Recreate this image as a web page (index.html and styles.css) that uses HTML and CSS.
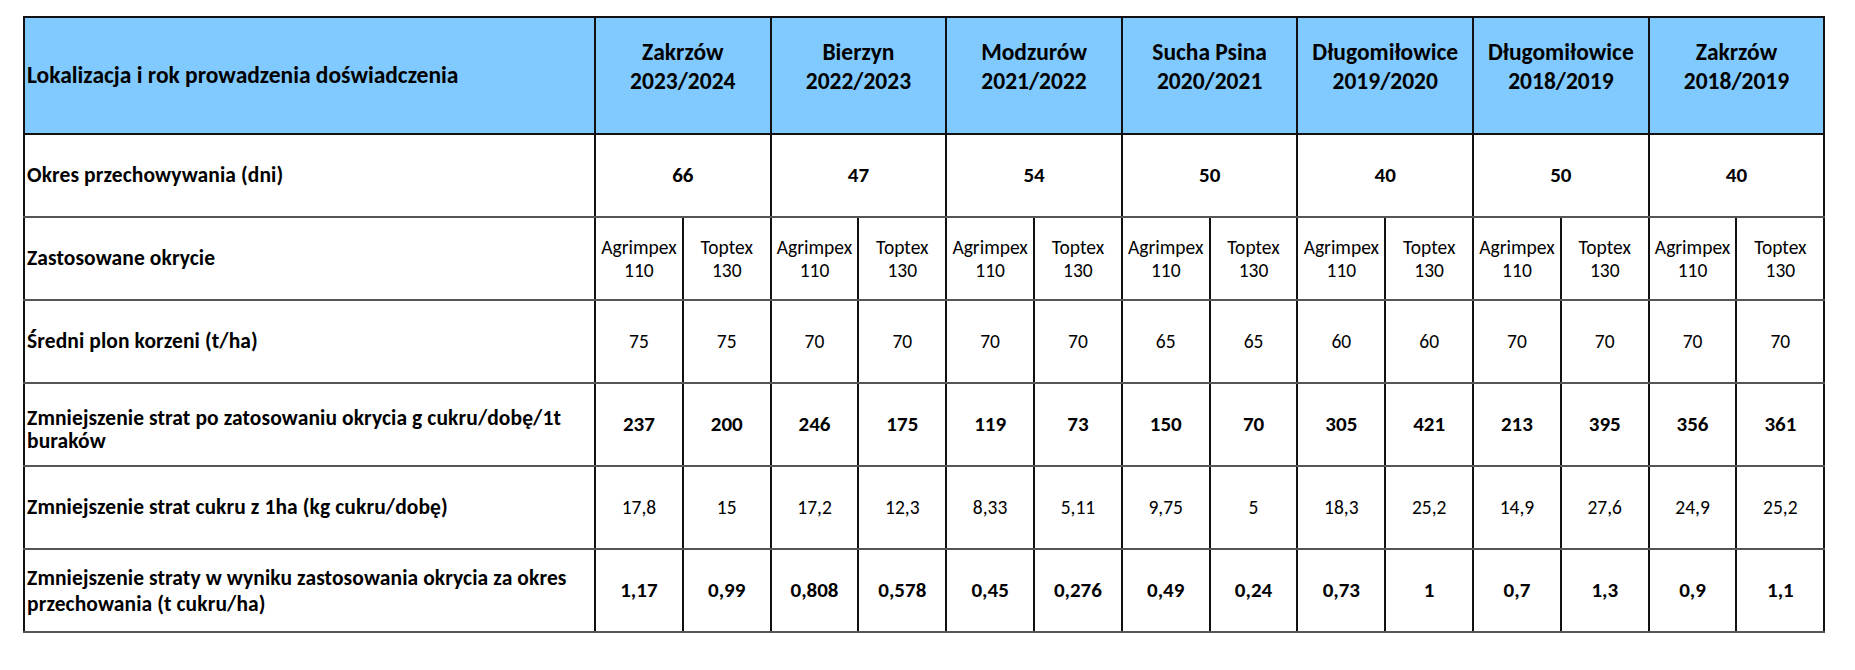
FILE: index.html
```html
<!DOCTYPE html>
<html lang="pl">
<head>
<meta charset="utf-8">
<title>Tabela</title>
<link rel="stylesheet" href="styles.css">
</head>
<body>
<table class="data">
  <colgroup>
    <col class="c-label">
    <col class="c-sub"><col class="c-sub"><col class="c-sub"><col class="c-sub">
    <col class="c-sub"><col class="c-sub"><col class="c-sub"><col class="c-sub">
    <col class="c-sub"><col class="c-sub"><col class="c-sub"><col class="c-sub">
    <col class="c-sub"><col class="c-sub">
  </colgroup>
  <thead>
    <tr class="r-head">
      <th class="label">Lokalizacja i rok prowadzenia doświadczenia</th>
      <th colspan="2" class="grp">Zakrzów<br>2023/2024</th>
      <th colspan="2" class="grp">Bierzyn<br>2022/2023</th>
      <th colspan="2" class="grp">Modzurów<br>2021/2022</th>
      <th colspan="2" class="grp">Sucha Psina<br>2020/2021</th>
      <th colspan="2" class="grp">Długomiłowice<br>2019/2020</th>
      <th colspan="2" class="grp">Długomiłowice<br>2018/2019</th>
      <th colspan="2" class="grp">Zakrzów<br>2018/2019</th>
    </tr>
  </thead>
  <tbody>
    <tr class="bold">
      <td class="label">Okres przechowywania (dni)</td>
      <td colspan="2">66</td>
      <td colspan="2">47</td>
      <td colspan="2">54</td>
      <td colspan="2">50</td>
      <td colspan="2">40</td>
      <td colspan="2">50</td>
      <td colspan="2">40</td>
    </tr>
    <tr>
      <td class="label">Zastosowane okrycie</td>
      <td class="sm">Agrimpex<br>110</td><td class="sm">Toptex<br>130</td>
      <td class="sm">Agrimpex<br>110</td><td class="sm">Toptex<br>130</td>
      <td class="sm">Agrimpex<br>110</td><td class="sm">Toptex<br>130</td>
      <td class="sm">Agrimpex<br>110</td><td class="sm">Toptex<br>130</td>
      <td class="sm">Agrimpex<br>110</td><td class="sm">Toptex<br>130</td>
      <td class="sm">Agrimpex<br>110</td><td class="sm">Toptex<br>130</td>
      <td class="sm">Agrimpex<br>110</td><td class="sm">Toptex<br>130</td>
    </tr>
    <tr>
      <td class="label">Średni plon korzeni (t/ha)</td>
      <td>75</td><td>75</td><td>70</td><td>70</td><td>70</td><td>70</td><td>65</td>
      <td>65</td><td>60</td><td>60</td><td>70</td><td>70</td><td>70</td><td>70</td>
    </tr>
    <tr class="bold">
      <td class="label low">Zmniejszenie strat po zatosowaniu okrycia g cukru/dobę/1t<br>buraków</td>
      <td>237</td><td>200</td><td>246</td><td>175</td><td>119</td><td>73</td><td>150</td>
      <td>70</td><td>305</td><td>421</td><td>213</td><td>395</td><td>356</td><td>361</td>
    </tr>
    <tr>
      <td class="label">Zmniejszenie strat cukru z 1ha (kg cukru/dobę)</td>
      <td>17,8</td><td>15</td><td>17,2</td><td>12,3</td><td>8,33</td><td>5,11</td><td>9,75</td>
      <td>5</td><td>18,3</td><td>25,2</td><td>14,9</td><td>27,6</td><td>24,9</td><td>25,2</td>
    </tr>
    <tr class="bold">
      <td class="label wide">Zmniejszenie straty w wyniku zastosowania okrycia za okres<br>przechowania (t cukru/ha)</td>
      <td>1,17</td><td>0,99</td><td>0,808</td><td>0,578</td><td>0,45</td><td>0,276</td><td>0,49</td>
      <td>0,24</td><td>0,73</td><td>1</td><td>0,7</td><td>1,3</td><td>0,9</td><td>1,1</td>
    </tr>
  </tbody>
</table>
</body>
</html>
```

FILE: styles.css
```css
html, body {
  margin: 0;
  padding: 0;
  background: #ffffff;
}

body {
  padding: 16px 0 0 23px;
  font-family: "Carlito", "Lato", "Liberation Sans", sans-serif;
  color: #000;
}

.data {
  border-collapse: collapse;
  table-layout: fixed;
  width: 1801px;
  font-size: 19.5px;
}

.c-label { width: 571px; }
.c-sub { width: 87.8px; }

.data th,
.data td {
  border: 2px solid #111;
  padding: 0 2px;
  text-align: center;
  vertical-align: middle;
  line-height: 23px;
  white-space: nowrap;
}

.data tbody tr { height: 83px; }
.data tbody td { border-top-color: #555; border-bottom-color: #555; }

.r-head { height: 117px; }
.r-head th {
  background: #80caff;
  font-weight: 700;
  font-size: 23.5px;
  line-height: 29px;
}

.r-head th.grp {
  padding-bottom: 18px;
}

.data .label {
  text-align: left;
  font-weight: 700;
  padding-left: 2px;
}

.data td.label {
  font-size: 21.5px;
  letter-spacing: 0.1px;
}

.data td.low {
  padding-top: 10px;
}

.data td.wide {
  line-height: 26px;
}

.bold td { font-weight: 700; font-size: 21px; }
.sm { line-height: 23px; }
```
